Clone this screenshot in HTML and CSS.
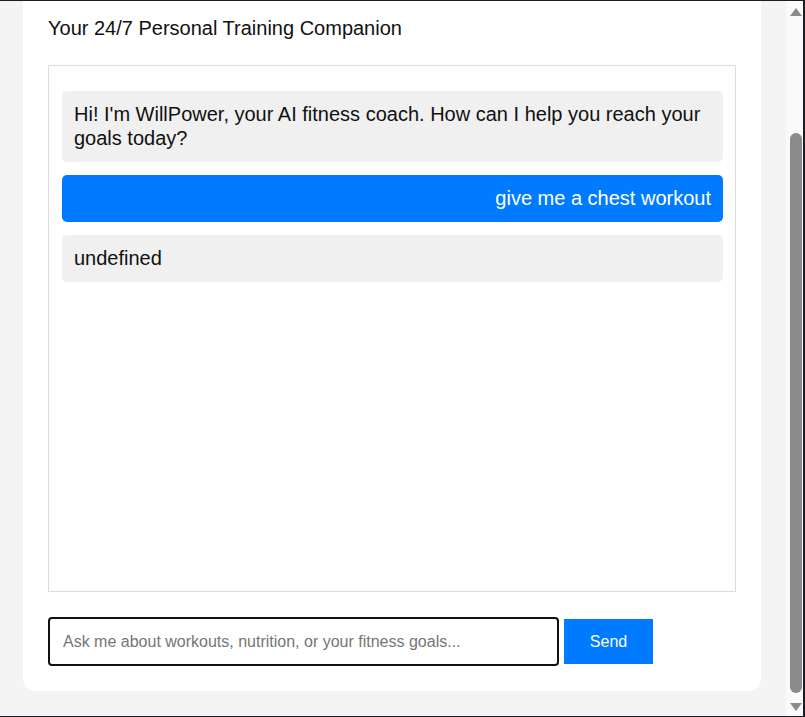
FILE: index.html
```html
<!DOCTYPE html>
<html lang="en">
<head>
<meta charset="utf-8">
<title>WillPower - AI Fitness Coach</title>
<link rel="stylesheet" href="styles.css">
</head>
<body>
<main class="card">
  <p class="subtitle">Your 24/7 Personal Training Companion</p>
  <div class="chat-box">
    <div class="msg bot">Hi! I'm WillPower, your AI fitness coach. How can I help you reach your goals today?</div>
    <div class="msg user">give me a chest workout</div>
    <div class="msg bot">undefined</div>
  </div>
  <form class="input-row">
    <input class="chat-input" type="text" placeholder="Ask me about workouts, nutrition, or your fitness goals...">
    <button class="send-btn" type="button">Send</button>
  </form>
</main>
<div class="scrollbar" aria-hidden="true">
  <svg class="arrow" width="12" height="8" viewBox="0 0 12 8"><path d="M6 0 L12 8 L0 8 Z" fill="#8b8b8b"/></svg>
  <div class="thumb"></div>
  <svg class="arrow arrow-down" width="12" height="8" viewBox="0 0 12 8"><path d="M0 0 L12 0 L6 8 Z" fill="#8b8b8b"/></svg>
</div>
<div class="frame"></div>
<script src="script.js"></script>
</body>
</html>
```
FILE: styles.css
```css
html {
  background: #f4f4f4;
  scrollbar-width: none;
}
::-webkit-scrollbar {
  display: none;
}
body {
  margin: 0;
  padding: 20px 0 26px 23px;
  font-family: "Liberation Sans", Arial, sans-serif;
  color: #111;
}
.card {
  width: 738px;
  box-sizing: border-box;
  background: #fff;
  border-radius: 12px;
  padding: 25px 25px 25px 25px;
}
.subtitle {
  margin: 0 0 25px;
  font-size: 20px;
  line-height: 23px;
}
.chat-box {
  height: 500px;
  border: 1px solid #dcdcdc;
  padding: 25px 12px 0 13px;
  overflow-y: auto;
  margin-bottom: 25px;
}
.msg {
  font-size: 20px;
  line-height: 23.5px;
  padding: 12px;
  border-radius: 5px;
  margin-bottom: 12.5px;
}
.bot {
  background: #f0f0f0;
  color: #111;
}
.user {
  background: #007bff;
  color: #fff;
  text-align: right;
}
.input-row {
  display: flex;
  align-items: center;
  gap: 5px;
  margin: 0;
}
.chat-input {
  width: 511px;
  height: 49px;
  box-sizing: border-box;
  border: 2px solid #111;
  border-radius: 4px;
  padding: 0 13px;
  font-family: "Liberation Sans", Arial, sans-serif;
  font-size: 16px;
  color: #111;
  outline: none;
}
.chat-input::placeholder {
  color: #767676;
}
.send-btn {
  width: 89px;
  height: 45px;
  border: none;
  background: #007bff;
  color: #fff;
  font-family: "Liberation Sans", Arial, sans-serif;
  font-size: 16px;
  cursor: pointer;
}
.scrollbar {
  position: fixed;
  top: 1px;
  bottom: 1px;
  right: 2px;
  width: 17px;
  box-sizing: border-box;
  padding: 7px 0 0 4px;
  background: #fafafa;
  display: flex;
  flex-direction: column;
  align-items: flex-start;
}
.arrow {
  display: block;
  flex: none;
}
.thumb {
  flex: none;
  width: 12px;
  height: 560px;
  margin-top: 117px;
  background: #8b8b8b;
  border-radius: 6px;
}
.arrow-down {
  margin-top: 10px;
}
.frame {
  position: fixed;
  inset: 0;
  border-top: 1px solid #1c1c24;
  border-right: 2px solid #1c1c24;
  border-bottom: 1px solid #1c1c24;
  pointer-events: none;
}
```
FILE: script.js
```js
var input = document.querySelector('.chat-input');
input.focus({ preventScroll: true });
window.scrollTo(0, document.documentElement.scrollHeight);
```
